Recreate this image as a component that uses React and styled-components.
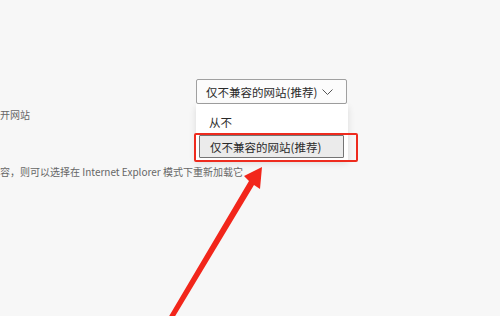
import styled, { createGlobalStyle } from 'styled-components'

const GlobalStyle = createGlobalStyle`
  html, body {
    margin: 0;
    padding: 0;
    background: #f7f7f7;
    font-family: "Noto Sans CJK SC", "Noto Sans", sans-serif;
  }
`

const Page = styled.div`
  position: relative;
  width: 500px;
  height: 316px;
  overflow: hidden;
  padding-top: 79px;
  box-sizing: border-box;
  display: flex;
  flex-direction: column;
`

const SelectWrap = styled.div`
  position: relative;
  margin-left: 196px;
  width: 151px;
`

const SelectBox = styled.div`
  height: 25px;
  box-sizing: border-box;
  border: 1px solid #a0a0a0;
  border-radius: 2px;
  background: #fcfcfc;
  display: flex;
  align-items: center;
  justify-content: space-between;
  padding: 0 13px 0 9px;
  font-size: 11.5px;
  color: #2a2a2a;
  white-space: nowrap;
`

const Menu = styled.div`
  position: absolute;
  top: 25px;
  left: 0;
  width: 152px;
  box-sizing: border-box;
  padding: 4px 4px 2px 3px;
  background: #ffffff;
  box-shadow: 0 3px 7px rgba(0, 0, 0, 0.12);
  display: flex;
  flex-direction: column;
`

const MenuItem = styled.div`
  height: ${({ selected }) => (selected ? '23px' : '27px')};
  box-sizing: border-box;
  display: flex;
  align-items: center;
  padding-left: 10px;
  font-size: 11.5px;
  color: #2a2a2a;
  white-space: nowrap;
  background: ${({ selected }) => (selected ? '#ebebeb' : 'transparent')};
  border: ${({ selected }) => (selected ? '1px solid #747474' : 'none')};
  border-radius: 1px;
`

const Highlight = styled.div`
  position: absolute;
  left: -2px;
  top: 29px;
  width: 164px;
  height: 29px;
  box-sizing: border-box;
  border: 2px solid #ee2b1e;
  border-radius: 2px;
`

const Line = styled.div`
  font-size: 10px;
  line-height: 14px;
  color: #666;
  white-space: nowrap;
  margin-top: ${({ gap }) => gap}px;
`

const Annotation = styled.svg`
  position: absolute;
  left: 0;
  top: 0;
  pointer-events: none;
`

const Chevron = () => (
  <svg width="11" height="6" viewBox="0 0 11 6">
    <polyline points="0.5,0.5 5.5,5.5 10.5,0.5" fill="none" stroke="#555" strokeWidth="1" />
  </svg>
)

export default function App() {
  return (
    <>
      <GlobalStyle />
      <Page>
        <SelectWrap>
          <SelectBox>
            <span>仅不兼容的网站(推荐)</span>
            <Chevron />
          </SelectBox>
          <Menu>
            <MenuItem>从不</MenuItem>
            <MenuItem selected>仅不兼容的网站(推荐)</MenuItem>
            <Highlight />
          </Menu>
        </SelectWrap>
        <Line gap={4}>开网站</Line>
        <Line gap={43}>容，则可以选择在 Internet Explorer 模式下重新加载它</Line>
        <Annotation width="500" height="316" viewBox="0 0 500 316">
          <polygon
            fill="#f2261b"
            points="168,318 174,318 254,185 260,189 262,167 244,176 249,181"
          />
        </Annotation>
      </Page>
    </>
  )
}
